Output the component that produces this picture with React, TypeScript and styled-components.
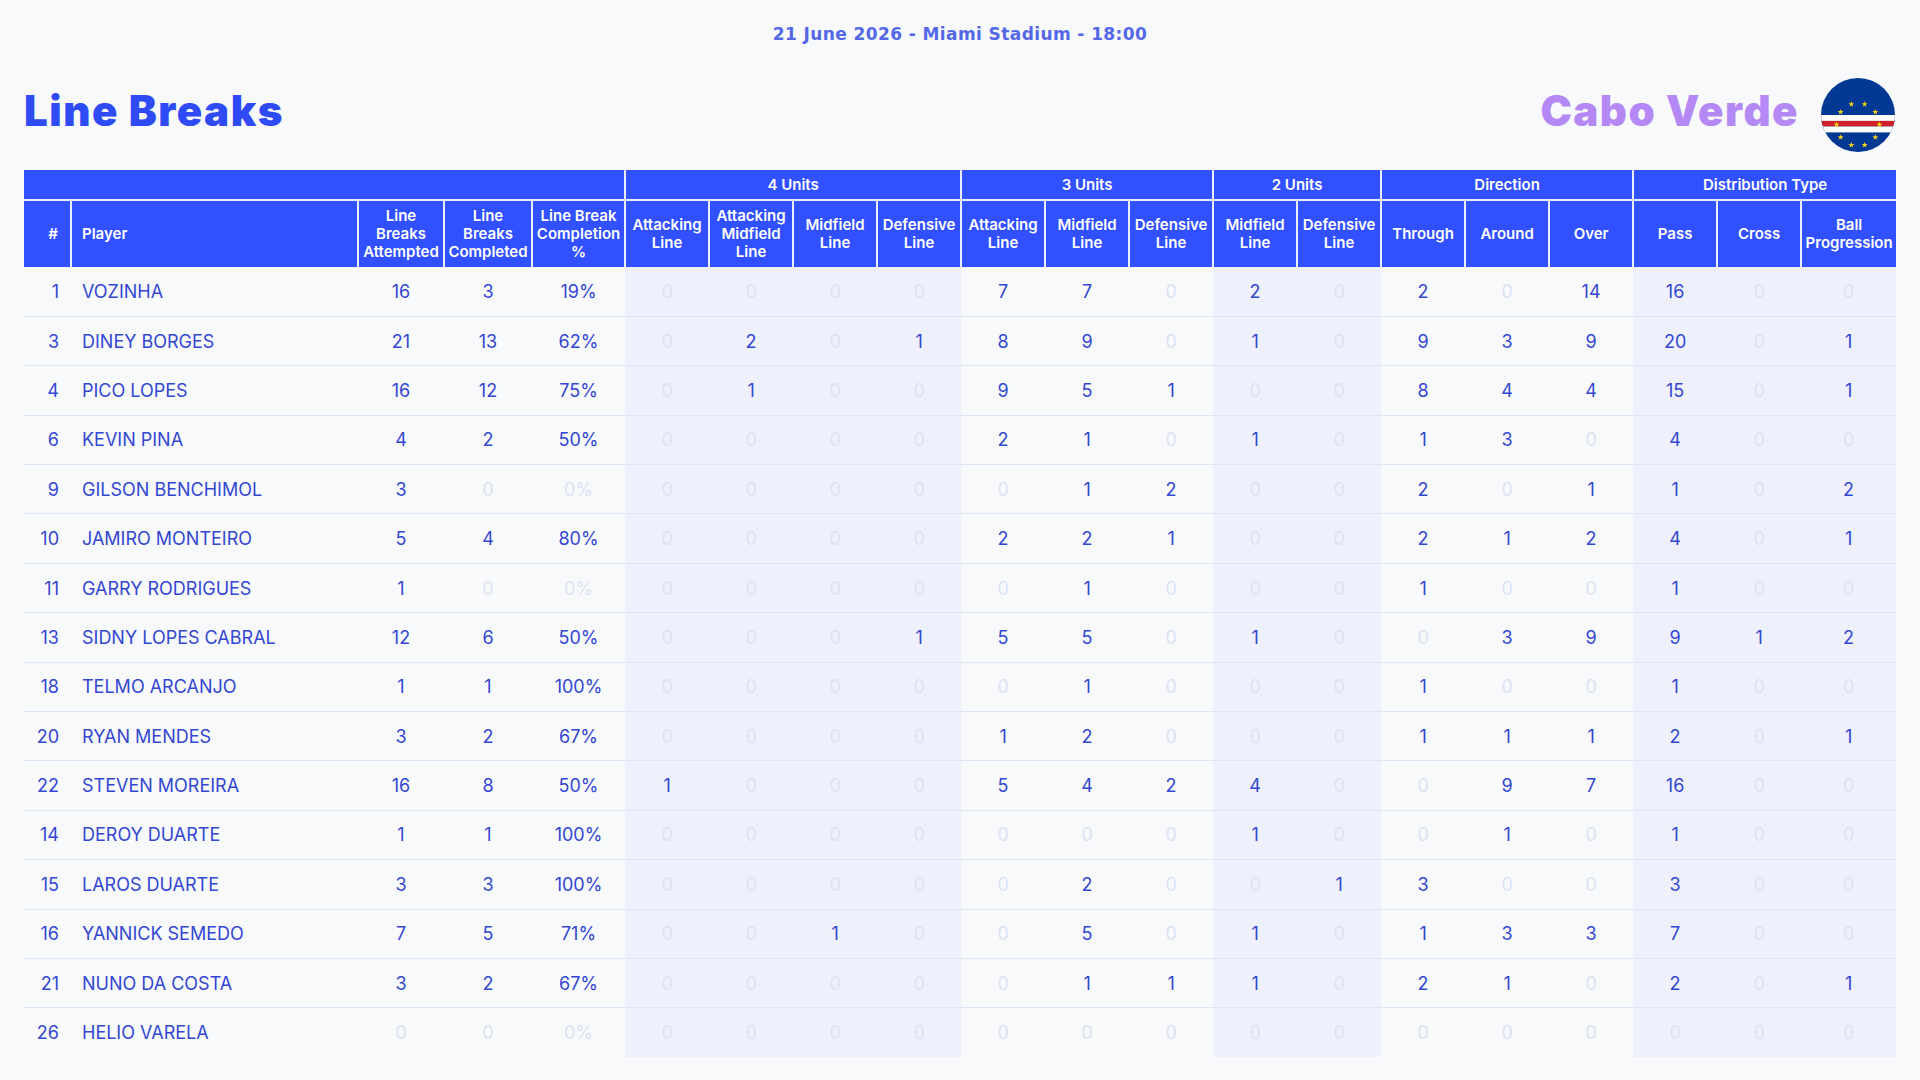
import React from "react";
import styled, { createGlobalStyle } from "styled-components";

const GlobalStyle = createGlobalStyle`
  * { box-sizing: border-box; }
  body {
    margin: 0;
    background: #f8f9fb;
    font-family: Inter, "Liberation Sans", sans-serif;
  }
`;

const Page = styled.div`
  width: 1920px;
  min-height: 1080px;
  padding: 22px 24px 0;
  background: #f8f9fb;
`;

const MatchInfo = styled.div`
  text-align: center;
  font-family: "DejaVu Sans", Inter, sans-serif;
  font-weight: 700;
  font-size: 17px;
  line-height: 24px;
  letter-spacing: 0.4px;
  color: #5468e6;
`;

const TitleRow = styled.div`
  display: flex;
  align-items: center;
  justify-content: space-between;
  margin-top: 31px;
  height: 76px;
`;

const Title = styled.h1<{ $color: string }>`
  margin: 0 0 10px;
  font-family: Inter, "Liberation Sans", sans-serif;
  font-weight: 900;
  font-size: 42px;
  letter-spacing: 1.5px;
  color: ${(p) => p.$color};
`;

const Team = styled.div`
  display: flex;
  align-items: center;
  gap: 22px;
  margin-right: 1px;
`;

const Table = styled.table`
  width: 1872px;
  margin-top: 17px;
  table-layout: fixed;
  border-collapse: collapse;
  color: #3347d1;
`;

const GroupCell = styled.th`
  height: 30px;
  padding: 0;
  background: #3150ff;
  color: #fff;
  font-size: 15px;
  font-weight: 600;
  text-align: center;
  border: 2px solid #e9ecff;
  border-top: none;
  &:first-child {
    border-left: none;
  }
  &:last-child {
    border-right: none;
  }
`;

const padFor = (align?: string) =>
  align === "left" ? "0 3px 0 10px" : align === "right" ? "0 12px 0 3px" : "0 3px";

const HeadCell = styled.th<{ $align?: string }>`
  height: 67px;
  padding: ${(p) => padFor(p.$align)};
  background: #3150ff;
  color: #fff;
  font-size: 15px;
  font-weight: 600;
  line-height: 18px;
  text-align: ${(p) => p.$align || "center"};
  border: 2px solid #e9ecff;
  border-bottom: none;
  &:first-child {
    border-left: none;
  }
  &:last-child {
    border-right: none;
  }
`;

const Row = styled.tr`
  border-bottom: 1.5px solid #dfe3f6;
  &:last-child {
    border-bottom: none;
  }
`;

const Cell = styled.td<{ $shade?: boolean; $faded?: boolean; $align?: string }>`
  height: 49.4px;
  padding: ${(p) => (p.$align === "left" ? "0 4px 0 11px" : p.$align === "right" ? "0 12px 0 4px" : "0 4px")};
  font-size: 18px;
  text-align: ${(p) => p.$align || "center"};
  color: ${(p) => (p.$faded ? "#dde2f4" : "#3347d1")};
  background: ${(p) => (p.$shade ? "#eef1fb" : "transparent")};
  white-space: nowrap;
`;

const Flag = () => {
  const stars: [number, number][] = [];
  for (let i = 0; i < 10; i++) {
    const a = (i / 10) * Math.PI * 2 + Math.PI / 10;
    stars.push([50 + 29 * Math.sin(a), 63 - 29 * Math.cos(a)]);
  }
  const starPath = (cx: number, cy: number, r: number) => {
    const pts: string[] = [];
    for (let k = 0; k < 10; k++) {
      const rr = k % 2 === 0 ? r : r * 0.42;
      const ang = (k * Math.PI) / 5 - Math.PI / 2;
      pts.push(`${(cx + rr * Math.cos(ang)).toFixed(2)},${(cy + rr * Math.sin(ang)).toFixed(2)}`);
    }
    return pts.join(" ");
  };
  return (
    <svg width="74" height="74" viewBox="0 0 100 100">
      <defs>
        <clipPath id="cv">
          <circle cx="50" cy="50" r="50" />
        </clipPath>
      </defs>
      <g clipPath="url(#cv)">
        <rect width="100" height="100" fill="#003893" />
        <rect y="50" width="100" height="8" fill="#fff" />
        <rect y="58" width="100" height="7.5" fill="#cf2027" />
        <rect y="65.5" width="100" height="8" fill="#fff" />
        {stars.map(([x, y], i) => (
          <polygon key={i} points={starPath(x, y, 4.2)} fill="#f7d116" />
        ))}
      </g>
    </svg>
  );
};

type Player = [number, string, number, number, ...number[]];

const players: Player[] = [
  [1, "VOZINHA", 16, 3, 0, 0, 0, 0, 7, 7, 0, 2, 0, 2, 0, 14, 16, 0, 0],
  [3, "DINEY BORGES", 21, 13, 0, 2, 0, 1, 8, 9, 0, 1, 0, 9, 3, 9, 20, 0, 1],
  [4, "PICO LOPES", 16, 12, 0, 1, 0, 0, 9, 5, 1, 0, 0, 8, 4, 4, 15, 0, 1],
  [6, "KEVIN PINA", 4, 2, 0, 0, 0, 0, 2, 1, 0, 1, 0, 1, 3, 0, 4, 0, 0],
  [9, "GILSON BENCHIMOL", 3, 0, 0, 0, 0, 0, 0, 1, 2, 0, 0, 2, 0, 1, 1, 0, 2],
  [10, "JAMIRO MONTEIRO", 5, 4, 0, 0, 0, 0, 2, 2, 1, 0, 0, 2, 1, 2, 4, 0, 1],
  [11, "GARRY RODRIGUES", 1, 0, 0, 0, 0, 0, 0, 1, 0, 0, 0, 1, 0, 0, 1, 0, 0],
  [13, "SIDNY LOPES CABRAL", 12, 6, 0, 0, 0, 1, 5, 5, 0, 1, 0, 0, 3, 9, 9, 1, 2],
  [18, "TELMO ARCANJO", 1, 1, 0, 0, 0, 0, 0, 1, 0, 0, 0, 1, 0, 0, 1, 0, 0],
  [20, "RYAN MENDES", 3, 2, 0, 0, 0, 0, 1, 2, 0, 0, 0, 1, 1, 1, 2, 0, 1],
  [22, "STEVEN MOREIRA", 16, 8, 1, 0, 0, 0, 5, 4, 2, 4, 0, 0, 9, 7, 16, 0, 0],
  [14, "DEROY DUARTE", 1, 1, 0, 0, 0, 0, 0, 0, 0, 1, 0, 0, 1, 0, 1, 0, 0],
  [15, "LAROS DUARTE", 3, 3, 0, 0, 0, 0, 0, 2, 0, 0, 1, 3, 0, 0, 3, 0, 0],
  [16, "YANNICK SEMEDO", 7, 5, 0, 0, 1, 0, 0, 5, 0, 1, 0, 1, 3, 3, 7, 0, 0],
  [21, "NUNO DA COSTA", 3, 2, 0, 0, 0, 0, 0, 1, 1, 1, 0, 2, 1, 0, 2, 0, 1],
  [26, "HELIO VARELA", 0, 0, 0, 0, 0, 0, 0, 0, 0, 0, 0, 0, 0, 0, 0, 0, 0],
];

const groups = [
  { label: "4 Units", cols: ["Attacking Line", "Attacking Midfield Line", "Midfield Line", "Defensive Line"], shade: true },
  { label: "3 Units", cols: ["Attacking Line", "Midfield Line", "Defensive Line"], shade: false },
  { label: "2 Units", cols: ["Midfield Line", "Defensive Line"], shade: true },
  { label: "Direction", cols: ["Through", "Around", "Over"], shade: false },
  { label: "Distribution Type", cols: ["Pass", "Cross", "Ball Progression"], shade: true },
];

// widths for #, Player, Attempted, Completed, Completion %, then 15 stat columns
const colWidths = [47, 287, 86, 88, 93, ...Array(14).fill(84), 95];

const shadeMap: boolean[] = groups.flatMap((g) => g.cols.map(() => g.shade));

export default function App() {
  return (
    <Page>
      <GlobalStyle />
      <MatchInfo>21 June 2026 - Miami Stadium - 18:00</MatchInfo>
      <TitleRow>
        <Title $color="#2f4bf5">Line Breaks</Title>
        <Team>
          <Title $color="#b488f5">Cabo Verde</Title>
          <Flag />
        </Team>
      </TitleRow>
      <Table>
        <colgroup>
          {colWidths.map((w, i) => (
            <col key={i} style={{ width: w }} />
          ))}
        </colgroup>
        <thead>
          <tr>
            <GroupCell colSpan={5} />
            {groups.map((g) => (
              <GroupCell key={g.label} colSpan={g.cols.length}>
                {g.label}
              </GroupCell>
            ))}
          </tr>
          <tr>
            <HeadCell $align="right">#</HeadCell>
            <HeadCell $align="left">Player</HeadCell>
            <HeadCell>Line Breaks Attempted</HeadCell>
            <HeadCell>Line Breaks Completed</HeadCell>
            <HeadCell>Line Break Completion %</HeadCell>
            {groups.flatMap((g) =>
              g.cols.map((c) => <HeadCell key={g.label + c}>{c}</HeadCell>)
            )}
          </tr>
        </thead>
        <tbody>
          {players.map(([num, name, att, comp, ...stats]) => {
            const pct = att ? Math.round((comp / att) * 100) : 0;
            return (
              <Row key={num}>
                <Cell $align="right">{num}</Cell>
                <Cell $align="left">{name}</Cell>
                <Cell $faded={att === 0}>{att}</Cell>
                <Cell $faded={comp === 0}>{comp}</Cell>
                <Cell $faded={pct === 0}>{pct}%</Cell>
                {stats.map((v, i) => (
                  <Cell key={i} $shade={shadeMap[i]} $faded={v === 0}>
                    {v}
                  </Cell>
                ))}
              </Row>
            );
          })}
        </tbody>
      </Table>
    </Page>
  );
}
